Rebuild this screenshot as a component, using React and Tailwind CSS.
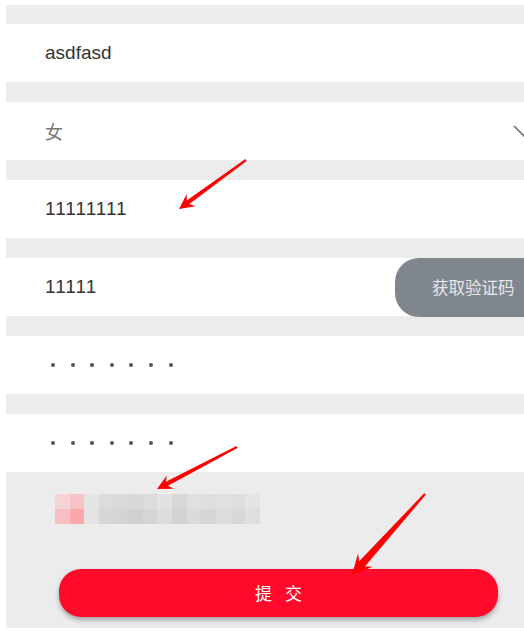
import React from "react"

const MOSAIC = [
  ["#f5d3d6", "#f7c3c7", "#e4e4e4", "#dcdcdc", "#dadada", "#d8d8d8", "#dcdcdc", "#e2e2e2", "#d8d8d8", "#e0e0e0", "#dedede", "#e1e1e1", "#dedede", "#e4e4e4"],
  ["#f7bec3", "#f9a8ae", "#e3e3e3", "#d6d6d6", "#d4d4d4", "#d0d0d0", "#d5d5d5", "#dcdcdc", "#d2d2d2", "#dadada", "#d6d6d6", "#dcdcdc", "#d8d8d8", "#dedede"],
]

// tapered arrow polygon from tail to tip
function arrowPoints(x1, y1, x2, y2, lineW, headLen, headW) {
  const dx = x2 - x1
  const dy = y2 - y1
  const len = Math.hypot(dx, dy)
  const ux = dx / len
  const uy = dy / len
  const nx = -uy
  const ny = ux
  const bx = x2 - ux * headLen
  const by = y2 - uy * headLen
  const ix = x2 - ux * headLen * 0.75
  const iy = y2 - uy * headLen * 0.75
  const p = [
    [x1 + nx * 1.1, y1 + ny * 1.1],
    [ix + nx * lineW, iy + ny * lineW],
    [bx + nx * headW, by + ny * headW],
    [x2, y2],
    [bx - nx * headW, by - ny * headW],
    [ix - nx * lineW, iy - ny * lineW],
    [x1 - nx * 1.1, y1 - ny * 1.1],
  ]
  return p.map((q) => q[0].toFixed(1) + "," + q[1].toFixed(1)).join(" ")
}

function Row({ children }) {
  return <div className="h-[58px] bg-white flex items-center pl-[39px]">{children}</div>
}

function Dots() {
  return (
    <div className="flex gap-[15.6px] pl-[6px]">
      {Array.from({ length: 7 }).map((_, i) => (
        <div key={i} className="w-[4px] h-[4px] rounded-full bg-[#555]" />
      ))}
    </div>
  )
}

export default function App() {
  return (
    <div className="relative w-[524px] h-[632px] bg-white overflow-hidden pt-[5px] pl-[6px] pb-[4px] font-['Liberation_Sans','Noto_Sans_CJK_SC',sans-serif] text-[19px] text-[#333]">
      <div className="h-full bg-[#ececec] flex flex-col pt-[19px]">
        <div className="flex flex-col gap-[20px]">
          <Row>
            <span>asdfasd</span>
          </Row>
          <Row>
            <div className="flex-1 flex items-center justify-between">
              <span className="text-[#777] font-['Noto_Sans_CJK_SC',sans-serif] text-[18px]">女</span>
              <svg width="22" height="12" viewBox="0 0 22 12" className="mr-[-11px]">
                <path d="M1 1 L11 11 L21 1" fill="none" stroke="#707070" strokeWidth="1.6" />
              </svg>
            </div>
          </Row>
          <Row>
            <span className="tracking-[1px]">11111111</span>
          </Row>
          <div className="h-[58px] bg-white flex items-center justify-between pl-[39px]">
            <span className="tracking-[1px]">11111</span>
            <div className="h-[59px] w-[129px] rounded-l-[24px] bg-[#80868e] flex items-center pl-[37px] font-['Noto_Sans_CJK_SC',sans-serif] text-[16.5px] text-[#e6e8ea] whitespace-nowrap">
              获取验证码
            </div>
          </div>
          <Row>
            <Dots />
          </Row>
          <Row>
            <Dots />
          </Row>
        </div>
        <div className="pt-[22px] pl-[49px]">
          <div className="flex flex-col w-[205px]">
            {MOSAIC.map((row, r) => (
              <div key={r} className="flex">
                {row.map((c, i) => (
                  <div key={i} className="h-[15px] flex-1" style={{ backgroundColor: c }} />
                ))}
              </div>
            ))}
          </div>
        </div>
        <div className="pt-[45px] pl-[53px]">
          <div className="w-[439px] h-[48px] rounded-[22px] bg-[#ff0a2b] shadow-[0_3px_5px_rgba(0,0,0,0.3)] flex items-center justify-center gap-[13px] text-white text-[17px] font-['Noto_Sans_CJK_SC',sans-serif]">
            <span>提</span>
            <span>交</span>
          </div>
        </div>
      </div>
      <svg className="absolute inset-0 pointer-events-none" width="524" height="632">
        <polygon points={arrowPoints(246, 160, 179, 209, 2.2, 15, 7.5)} fill="#ff0000" />
        <polygon points={arrowPoints(237, 447, 157, 489, 2.2, 15, 7.5)} fill="#ff0000" />
        <polygon points={arrowPoints(425, 494, 352, 575, 3.8, 20, 10)} fill="#ff0000" />
      </svg>
    </div>
  )
}
